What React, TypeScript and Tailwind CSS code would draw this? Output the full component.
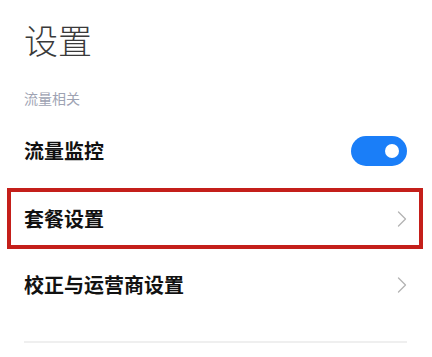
import React from "react";

function Chevron() {
  return (
    <svg width="10" height="16" viewBox="0 0 10 16" fill="none" className="shrink-0">
      <path d="M1.5 1 L8.5 8 L1.5 15" stroke="#b3b3b3" strokeWidth="1.3" strokeLinecap="round" strokeLinejoin="round" />
    </svg>
  );
}

export default function App() {
  const font = { fontFamily: '"Noto Sans CJK SC", "Noto Sans", sans-serif' };
  return (
    <div className="w-[432px] h-[357px] bg-white overflow-hidden" style={font}>
      <div className="pt-[23px] pl-[24px] text-[34px] leading-[34px] font-light text-[#3a3a3a]">设置</div>
      <div className="mt-[34px] pl-[24px] text-[14px] leading-[14px] text-[#9ea3b3]">流量相关</div>
      <div className="mt-[12px] flex flex-col">
        <div className="h-[67px] flex items-center justify-between pl-[24px] pr-[25px]">
          <span className="text-[20px] leading-[20px] font-semibold text-[#111]">流量监控</span>
          <div className="w-[56px] h-[30px] rounded-full bg-[#1a7ef8] flex items-center justify-end pr-[8px]">
            <div className="w-[14px] h-[14px] rounded-full bg-white" />
          </div>
        </div>
        <div className="h-[67px] flex pt-[4px] pl-[7px] pr-[9px]">
          <div className="w-full h-[61px] border-[4px] border-[#c41f1a] flex items-center justify-between pl-[13px] pr-[12px]">
            <span className="text-[20px] leading-[20px] font-semibold text-[#111]">套餐设置</span>
            <Chevron />
          </div>
        </div>
        <div className="h-[67px] flex items-center justify-between pl-[24px] pr-[25px]">
          <span className="text-[20px] leading-[20px] font-semibold text-[#111]">校正与运营商设置</span>
          <Chevron />
        </div>
      </div>
      <div className="mt-[23px] ml-[24px] mr-[25px] h-[2px] bg-[#efefef]" />
    </div>
  );
}
